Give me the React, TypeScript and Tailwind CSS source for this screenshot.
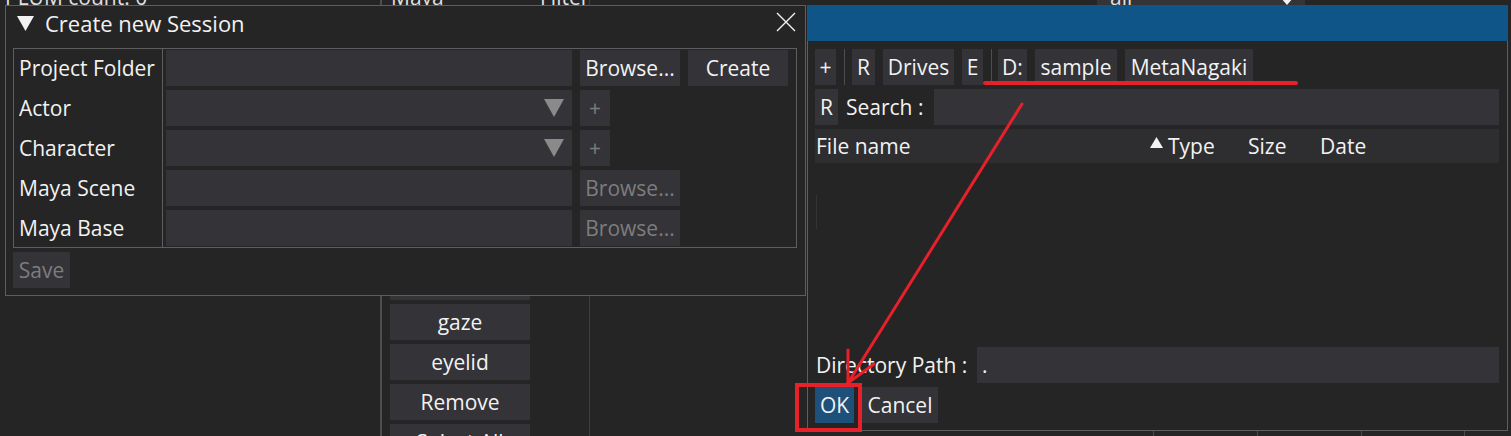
import React from 'react';

const font = "font-['Open_Sans',sans-serif]";

const Frame = ({
  className = '',
  bg = 'bg-[#333338]',
  children,
}: {
  className?: string;
  bg?: string;
  children?: React.ReactNode;
}) => <div className={`h-[36px] flex items-center ${bg} ${className}`}>{children}</div>;

const ComboArrow = () => (
  <svg width="20" height="18" viewBox="0 0 20 18" className="mr-[8px] ml-auto">
    <polygon points="0,0 20,0 10,18" fill="#8a8a8a" />
  </svg>
);

const CreateSession = () => {
  const labels = ['Project Folder', 'Actor', 'Character', 'Maya Scene', 'Maya Base'];
  return (
    <div className="absolute left-[5px] top-[5px] w-[801px] h-[291px] border border-[#5e5e5e] bg-[#252525] flex flex-col">
      <div className="h-[34px] flex items-center pl-[11px] pr-[9px] shrink-0">
        <svg width="17" height="15" viewBox="0 0 17 15">
          <polygon points="0,0 17,0 8.5,15" fill="#f2f2f2" />
        </svg>
        <span className="ml-[11px] mt-[-1px] text-[22px]">Create new Session</span>
        <svg width="20" height="20" viewBox="0 0 20 20" className="ml-auto mt-[-2px]">
          <path d="M1 1 L19 19 M19 1 L1 19" stroke="#f2f2f2" strokeWidth="1.4" />
        </svg>
      </div>
      <div className="pl-[7px] pt-[8px]">
        <div className="w-[784px] border border-[#5e5e5e] flex">
          <div className="w-[149px] border-r border-[#5e5e5e] flex flex-col gap-[4px] pt-[1px] pb-[1px]">
            {labels.map((l) => (
              <div key={l} className="h-[36px] flex items-center pl-[5px] whitespace-nowrap">
                {l}
              </div>
            ))}
          </div>
          <div className="flex flex-col gap-[4px] pl-[3px] pt-[1px] pb-[1px]">
            <div className="flex gap-[8px]">
              <Frame className="w-[406px]" />
              <Frame className="w-[100px] justify-center">Browse...</Frame>
              <Frame className="w-[100px] justify-center">Create</Frame>
            </div>
            <div className="flex gap-[8px]">
              <Frame className="w-[406px]">
                <ComboArrow />
              </Frame>
              <Frame className="w-[30px] justify-center text-[#7d7d7d]">+</Frame>
            </div>
            <div className="flex gap-[8px]">
              <Frame className="w-[406px]">
                <ComboArrow />
              </Frame>
              <Frame className="w-[30px] justify-center text-[#7d7d7d]">+</Frame>
            </div>
            <div className="flex gap-[8px]">
              <Frame className="w-[406px]" />
              <Frame className="w-[100px] justify-center text-[#7d7d7d]">Browse...</Frame>
            </div>
            <div className="flex gap-[8px]">
              <Frame className="w-[406px]" />
              <Frame className="w-[100px] justify-center text-[#7d7d7d]">Browse...</Frame>
            </div>
          </div>
        </div>
        <Frame className="mt-[4px] w-[57px] justify-center text-[#7d7d7d]">Save</Frame>
      </div>
    </div>
  );
};

const FileDialog = () => (
  <div className="absolute left-[807px] top-[5px] w-[701px] h-[426px] border border-[#5e5e5e] bg-[#252525] flex flex-col">
    <div className="h-[36px] bg-[#105588] shrink-0 -mx-px -mt-px" />
    <div className="flex flex-col pl-[7px] pr-[8px] pt-[8px] flex-1">
      <div className="flex items-center h-[36px]">
        <Frame className="w-[21px] justify-center">+</Frame>
        <div className="w-px h-[36px] bg-[#4e4e52] ml-[8px]" />
        <Frame className="w-[23px] justify-center ml-[7px]">R</Frame>
        <Frame className="w-[71px] justify-center ml-[8px]">Drives</Frame>
        <Frame className="w-[21px] justify-center ml-[8px]">E</Frame>
        <div className="w-px h-[36px] bg-[#4e4e52] ml-[8px]" />
        <Frame className="w-[29px] justify-center ml-[6px]">D:</Frame>
        <Frame className="w-[82px] justify-center ml-[8px]">sample</Frame>
        <Frame className="w-[128px] justify-center ml-[8px]">MetaNagaki</Frame>
      </div>
      <div className="flex items-center h-[36px] mt-[4px]">
        <Frame className="w-[23px] justify-center">R</Frame>
        <span className="ml-[8px]">Search :</span>
        <Frame className="ml-auto w-[565px]" />
      </div>
      <div className="flex items-center h-[34px] mt-[4px] bg-[#2e2e31] pl-[1px]">
        <span className="w-[334px]">File name</span>
        <span className="w-[98px] flex items-center">
          <svg width="13" height="11" viewBox="0 0 13 11" className="mt-[-8px] mr-[5px]">
            <polygon points="6.5,0 13,11 0,11" fill="#f2f2f2" />
          </svg>
          Type
        </span>
        <span className="w-[72px]">Size</span>
        <span>Date</span>
      </div>
      <div className="flex-1 relative">
        <div className="absolute left-[1px] top-[32px] w-px h-[34px] bg-[#343437]" />
      </div>
      <div className="flex items-center h-[36px]">
        <span className="pl-[1px]">Directory Path :</span>
        <Frame className="ml-auto w-[522px] pl-[5px]">.</Frame>
      </div>
      <div className="flex items-center h-[36px] mt-[4px] mb-[7px] gap-[8px]">
        <Frame className="w-[39px] justify-center" bg="bg-[#1f5079]">
          OK
        </Frame>
        <Frame className="w-[76px] justify-center">Cancel</Frame>
      </div>
    </div>
  </div>
);

const Backdrop = () => (
  <>
    <div className="absolute left-[5px] top-[-15px] text-[#e0e0e0]">PLUM count: 0</div>
    <div className="absolute left-[391px] top-[-15px] text-[#e0e0e0]">Maya</div>
    <div className="absolute left-[540px] top-[-15px] text-[#e0e0e0]">Filter</div>
    <div className="absolute left-[1097px] top-0 w-[208px] h-[5px] bg-[#333338]" />
    <div className="absolute left-[1110px] top-[-15px] text-[#e0e0e0]">all</div>
    <svg width="14" height="5" viewBox="0 0 14 5" className="absolute left-[1280px] top-0">
      <polygon points="0,-3 14,-3 7,5" fill="#f2f2f2" />
    </svg>
    <div className="absolute left-[380px] top-0 bottom-0 w-[2px] bg-[#4d4d4d]" />
    <div className="absolute left-[589px] top-0 bottom-0 w-px bg-[#3e3e3e]" />
    <div className="absolute left-[390px] top-[264px] w-[140px] flex flex-col gap-[4px]">
      <Frame className="justify-center" />
      <Frame className="justify-center">gaze</Frame>
      <Frame className="justify-center">eyelid</Frame>
      <Frame className="justify-center">Remove</Frame>
      <Frame className="justify-center">Select All</Frame>
    </div>
    <div className="absolute left-[1153px] top-[430px] w-px h-[6px] bg-[#4a4a4a]" />
    <div className="absolute left-[1257px] top-[430px] w-px h-[6px] bg-[#4a4a4a]" />
    <div className="absolute left-[1361px] top-[430px] w-px h-[6px] bg-[#4a4a4a]" />
    <div className="absolute left-[1464px] top-[430px] w-px h-[6px] bg-[#4a4a4a]" />
  </>
);

const Annotations = () => (
  <svg width="1511" height="436" viewBox="0 0 1511 436" className="absolute left-0 top-0 pointer-events-none">
    <line x1="985" y1="83" x2="1296" y2="83" stroke="#e8202a" strokeWidth="4" strokeLinecap="round" />
    <line x1="1022" y1="104" x2="848" y2="383" stroke="#e8202a" strokeWidth="3" strokeLinecap="round" />
    <line x1="848" y1="350" x2="848" y2="383" stroke="#e8202a" strokeWidth="3" strokeLinecap="round" />
    <line x1="874" y1="364" x2="848" y2="383" stroke="#e8202a" strokeWidth="3" strokeLinecap="round" />
    <rect x="797" y="385" width="63" height="45" fill="none" stroke="#e8202a" strokeWidth="4" />
  </svg>
);

export default function App() {
  return (
    <div className={`relative w-[1511px] h-[436px] overflow-hidden bg-[#252525] text-[#f2f2f2] text-[21px] leading-[24px] ${font}`}>
      <Backdrop />
      <CreateSession />
      <FileDialog />
      <Annotations />
    </div>
  );
}
